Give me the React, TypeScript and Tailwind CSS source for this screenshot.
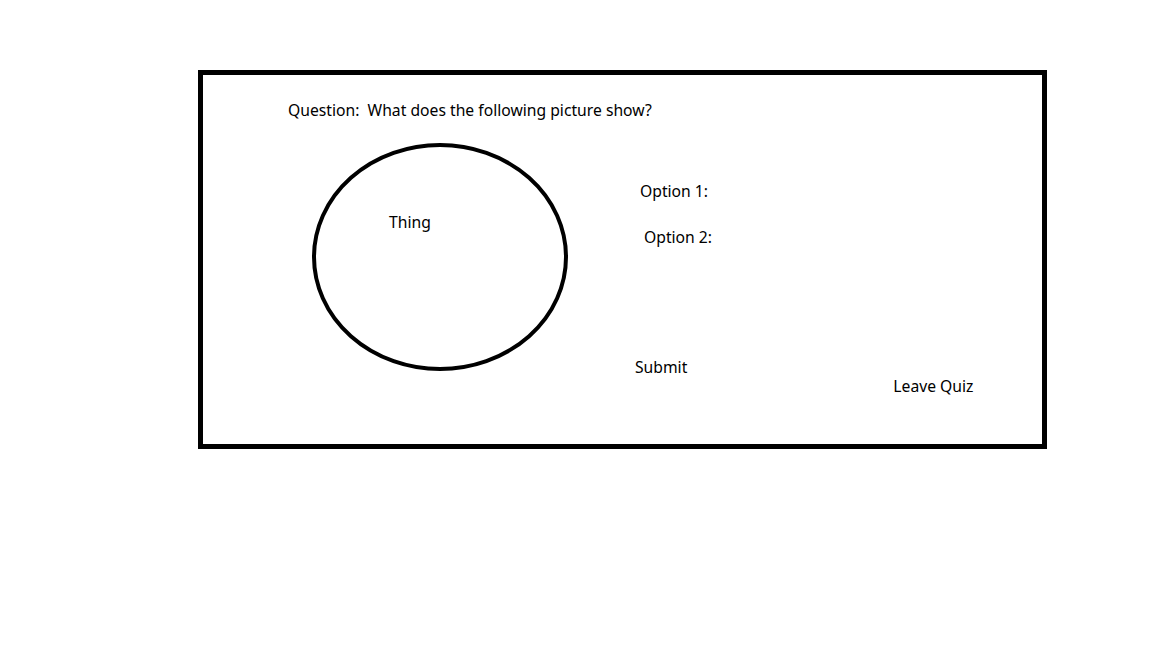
import React from 'react';

const font = { fontFamily: '"Noto Sans", "Open Sans", sans-serif' };

export default function App() {
    return (
        <div className="w-[1152px] h-[648px] bg-white pt-[70px] pl-[198px] text-black text-[15.7px] leading-[20px]" style={font}>
            <div className="w-[849px] h-[379px] border-[5px] border-black">
                {/* Question line */}
                <p className="ml-[85px] mt-[25px] whitespace-pre">Question:  What does the following picture show?</p>

                <div className="flex mt-[23px]">
                    {/* Picture placeholder */}
                    <div className="relative ml-[109px] w-[256px] h-[228px] shrink-0">
                        <svg width="256" height="228" viewBox="0 0 256 228">
                            <ellipse cx="128" cy="114" rx="126" ry="112" fill="none" stroke="#000" strokeWidth="4" />
                        </svg>
                        <span className="absolute left-[77px] top-[69px]">Thing</span>
                    </div>

                    {/* Answers + actions */}
                    <div className="flex flex-col ml-[72px] w-[420px]">
                        <span className="mt-[38px]">Option 1:</span>
                        <span className="mt-[26px] ml-[4px]">Option 2:</span>
                        <div className="flex items-start mt-[110px]">
                            <span className="ml-[-5px]">Submit</span>
                            <span className="ml-[206px] mt-[19px]">Leave Quiz</span>
                        </div>
                    </div>
                </div>
            </div>
        </div>
    );
}
